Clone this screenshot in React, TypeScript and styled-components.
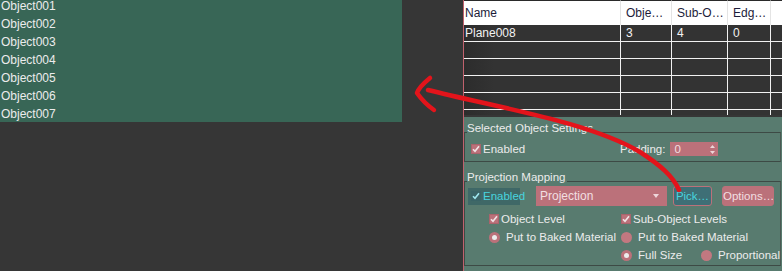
import React from 'react'
import styled, { createGlobalStyle } from 'styled-components'

const colors = {
  page: '#363636',
  list: '#386656',
  panel: '#587b6f',
  pink: '#bb717a',
  pinkLine: '#c0616d',
  pinkText: '#f2dfe1',
  teal: '#3e6f76',
  tealDark: '#3f6867',
  cyan: '#48d4df',
  text: '#ececec',
  groupLine: '#3d4a45',
  row: '#333333',
  grid: '#f2f2f2'
}

const GlobalStyle = createGlobalStyle`
  html, body {
    margin: 0;
    padding: 0;
    background: ${colors.page};
    font-family: "Liberation Sans", Arial, sans-serif;
    font-size: 11.5px;
    color: ${colors.text};
  }
`

const Page = styled.div`
  position: relative;
  width: 782px;
  height: 271px;
  display: flex;
  overflow: hidden;
  background: ${colors.page};
`

const ListArea = styled.div`
  width: 463px;
  flex: none;
`

const ObjectList = styled.div`
  width: 402px;
  height: 122px;
  overflow: hidden;
  background: ${colors.list};
`

const ObjectRows = styled.div`
  margin-top: -3px;
`

const ObjectRow = styled.div`
  height: 18px;
  line-height: 18px;
  padding-left: 1px;
  font-size: 12px;
`

const Side = styled.div`
  flex: 1;
  display: flex;
  flex-direction: column;
  border-left: 1px solid ${colors.pinkLine};
`

const Table = styled.div`
  height: 115px;
  margin-bottom: 2px;
  overflow: hidden;
  display: grid;
  grid-template-columns: 157px 51px 56px 43px 1fr;
  grid-auto-rows: 17px;
  grid-template-rows: 25px;
  background: linear-gradient(to right, #2c2c2c, ${colors.row} 30px);
`

const HeadCell = styled.div<{ $first?: boolean }>`
  background: #ffffff;
  border-top: 1px solid #2a2a2a;
  border-right: 1px solid #e4e4e4;
  color: #1c1c3a;
  font-size: 12px;
  line-height: 24px;
  padding-left: ${(p) => (p.$first ? 1 : 5)}px;
  white-space: nowrap;
  overflow: hidden;
`

const Cell = styled.div<{ $first?: boolean }>`
  border-right: 1px solid ${colors.grid};
  border-bottom: 1px solid ${colors.grid};
  color: #f2f2f2;
  font-size: 12px;
  line-height: 16px;
  padding-left: ${(p) => (p.$first ? 1 : 5)}px;
  white-space: nowrap;
  overflow: hidden;
`

const Panel = styled.div`
  flex: 1;
  background: ${colors.panel};
  padding: 4px 3px 0 0;
`

const Group = styled.fieldset<{ $gap?: number }>`
  margin: ${(p) => p.$gap ?? 0}px 0 0 0;
  padding: 0 0 ${(p) => (p.$gap ? 1 : 5)}px 0;
  min-inline-size: 0;
  border: 1px solid ${colors.groupLine};
  border-right-color: #4a5a53;
`

const Title = styled.legend`
  margin-left: 2px;
  padding: 0 2px 8px 0;
  line-height: 14px;
  font-size: 11.5px;
  color: ${colors.text};
`

const SettingsRow = styled.div`
  height: 14px;
  margin-top: -1px;
  padding-left: 6px;
  display: flex;
  align-items: center;
`

const MappingRow = styled.div`
  height: 20px;
  margin-top: -6px;
  padding-left: 3px;
  display: flex;
  align-items: center;
`

const LevelGrid = styled.div`
  margin-top: 4px;
  padding-left: 24px;
  display: grid;
  grid-template-columns: 132px 80px auto;
  grid-auto-rows: 18px;
  align-items: center;
`

const CheckLabel = styled.label<{ $width?: number; $active?: boolean }>`
  display: flex;
  align-items: center;
  gap: 2px;
  box-sizing: border-box;
  flex: none;
  width: ${(p) => (p.$width ? `${p.$width}px` : 'auto')};
  height: ${(p) => (p.$active ? '17px' : 'auto')};
  padding-left: ${(p) => (p.$active ? '3px' : '0')};
  background: ${(p) => (p.$active ? colors.tealDark : 'transparent')};
  color: ${(p) => (p.$active ? colors.cyan : colors.text)};
  white-space: nowrap;
  overflow: visible;
`

const Box = styled.span<{ $active?: boolean }>`
  width: 10px;
  height: 10px;
  flex: none;
  box-sizing: border-box;
  display: flex;
  align-items: center;
  justify-content: center;
  background: ${(p) => (p.$active ? '#3a6467' : colors.pink)};
  border: 1px solid ${(p) => (p.$active ? '#3a6467' : '#a9646c')};
`

const RadioLabel = styled.label<{ $span?: number }>`
  display: flex;
  align-items: center;
  gap: 6px;
  white-space: nowrap;
  grid-column: span ${(p) => p.$span ?? 1};
`

const RadioDot = styled.span<{ $on?: boolean }>`
  width: 11px;
  height: 11px;
  flex: none;
  border-radius: 50%;
  background: ${(p) => (p.$on ? colors.pink : '#c27880')};
  display: flex;
  align-items: center;
  justify-content: center;

  &::after {
    content: '';
    width: 5px;
    height: 5px;
    border-radius: 50%;
    background: ${(p) => (p.$on ? '#ececec' : 'transparent')};
  }
`

const FieldLabel = styled.span`
  white-space: nowrap;
`

const Spinner = styled.div`
  width: 48px;
  height: 14px;
  margin-left: 5px;
  box-sizing: border-box;
  padding: 0 3px 0 4px;
  display: flex;
  align-items: center;
  justify-content: space-between;
  background: ${colors.pink};
  color: ${colors.pinkText};
`

const Dropdown = styled.div`
  width: 131px;
  height: 20px;
  flex: none;
  margin-left: 16px;
  box-sizing: border-box;
  padding: 0 8px 0 4px;
  display: flex;
  align-items: center;
  justify-content: space-between;
  background: ${colors.pink};
  color: ${colors.pinkText};
  font-size: 12px;
`

const Caret = styled.span`
  width: 0;
  height: 0;
  border-left: 3px solid transparent;
  border-right: 3px solid transparent;
  border-top: 4px solid #eed6da;
`

const Button = styled.button<{ $accent?: boolean; $width: number }>`
  width: ${(p) => p.$width}px;
  height: 20px;
  flex: none;
  box-sizing: border-box;
  margin-left: ${(p) => (p.$accent ? 6 : 10)}px;
  padding: 0;
  border-radius: 3px;
  border: 1px solid ${colors.pink};
  background: ${(p) => (p.$accent ? colors.teal : colors.pink)};
  color: ${(p) => (p.$accent ? colors.cyan : colors.pinkText)};
  font-family: inherit;
  font-size: 11.5px;
  line-height: 18px;
  white-space: nowrap;
  overflow: visible;
`

const Annotation = styled.svg`
  position: absolute;
  left: 0;
  top: 0;
  pointer-events: none;
`

function Check({ color = '#f1e4e6' }: { color?: string }) {
  return (
    <svg width="8" height="8" viewBox="0 0 8 8">
      <path d="M1 4.2 L3 6.3 L7 1.2" fill="none" stroke={color} strokeWidth="1.6" />
    </svg>
  )
}

function SpinArrows() {
  return (
    <svg width="5" height="9" viewBox="0 0 5 9">
      <path d="M2.5 0 L5 3 L0 3 Z M2.5 9 L5 6 L0 6 Z" fill="#ecd6d9" />
    </svg>
  )
}

const objects = ['Object001', 'Object002', 'Object003', 'Object004', 'Object005', 'Object006', 'Object007']
const headers = ['Name', 'Obje…', 'Sub-O…', 'Edg…', '']
const tableRows = [['Plane008', '3', '4', '0', ''], ...Array(5).fill(['', '', '', '', ''])]

export default function App() {
  return (
    <>
      <GlobalStyle />
      <Page>
        <ListArea>
          <ObjectList>
            <ObjectRows>
              {objects.map((name) => (
                <ObjectRow key={name}>{name}</ObjectRow>
              ))}
            </ObjectRows>
          </ObjectList>
        </ListArea>

        <Side>
          <Table>
            {headers.map((h, i) => (
              <HeadCell key={i} $first={i === 0}>
                {h}
              </HeadCell>
            ))}
            {tableRows.map((row, r) =>
              row.map((value: string, c: number) => (
                <Cell key={`${r}-${c}`} $first={c === 0}>
                  {value}
                </Cell>
              ))
            )}
          </Table>

          <Panel>
            <Group>
              <Title>Selected Object Settings</Title>
              <SettingsRow>
                <CheckLabel $width={149}>
                  <Box>
                    <Check />
                  </Box>
                  Enabled
                </CheckLabel>
                <FieldLabel>Padding:</FieldLabel>
                <Spinner>
                  <span>0</span>
                  <SpinArrows />
                </Spinner>
              </SettingsRow>
            </Group>

            <Group $gap={8}>
              <Title>Projection Mapping</Title>
              <MappingRow>
                <CheckLabel $active $width={52}>
                  <Box $active>
                    <Check color="#9fe6ee" />
                  </Box>
                  Enabled
                </CheckLabel>
                <Dropdown>
                  <span>Projection</span>
                  <Caret />
                </Dropdown>
                <Button $accent $width={39}>
                  Pick…
                </Button>
                <Button $width={52}>Options…</Button>
              </MappingRow>
              <LevelGrid>
                <CheckLabel>
                  <Box>
                    <Check />
                  </Box>
                  Object Level
                </CheckLabel>
                <CheckLabel style={{ gridColumn: 'span 2' }}>
                  <Box>
                    <Check />
                  </Box>
                  Sub-Object Levels
                </CheckLabel>
                <RadioLabel>
                  <RadioDot $on />
                  Put to Baked Material
                </RadioLabel>
                <RadioLabel $span={2}>
                  <RadioDot />
                  Put to Baked Material
                </RadioLabel>
                <span />
                <RadioLabel>
                  <RadioDot $on />
                  Full Size
                </RadioLabel>
                <RadioLabel>
                  <RadioDot />
                  Proportional
                </RadioLabel>
              </LevelGrid>
            </Group>
          </Panel>
        </Side>

        <Annotation width="782" height="271" viewBox="0 0 782 271">
          <g fill="none" stroke="#e3141b" strokeWidth="4.5" strokeLinecap="round" strokeLinejoin="round">
            <path d="M428 90 C 495 107, 590 122, 640 152 C 660 165, 673 176, 679 190" />
            <path d="M430 78 Q 419 87, 417 93 Q 424 103, 434 110" />
          </g>
        </Annotation>
      </Page>
    </>
  )
}
